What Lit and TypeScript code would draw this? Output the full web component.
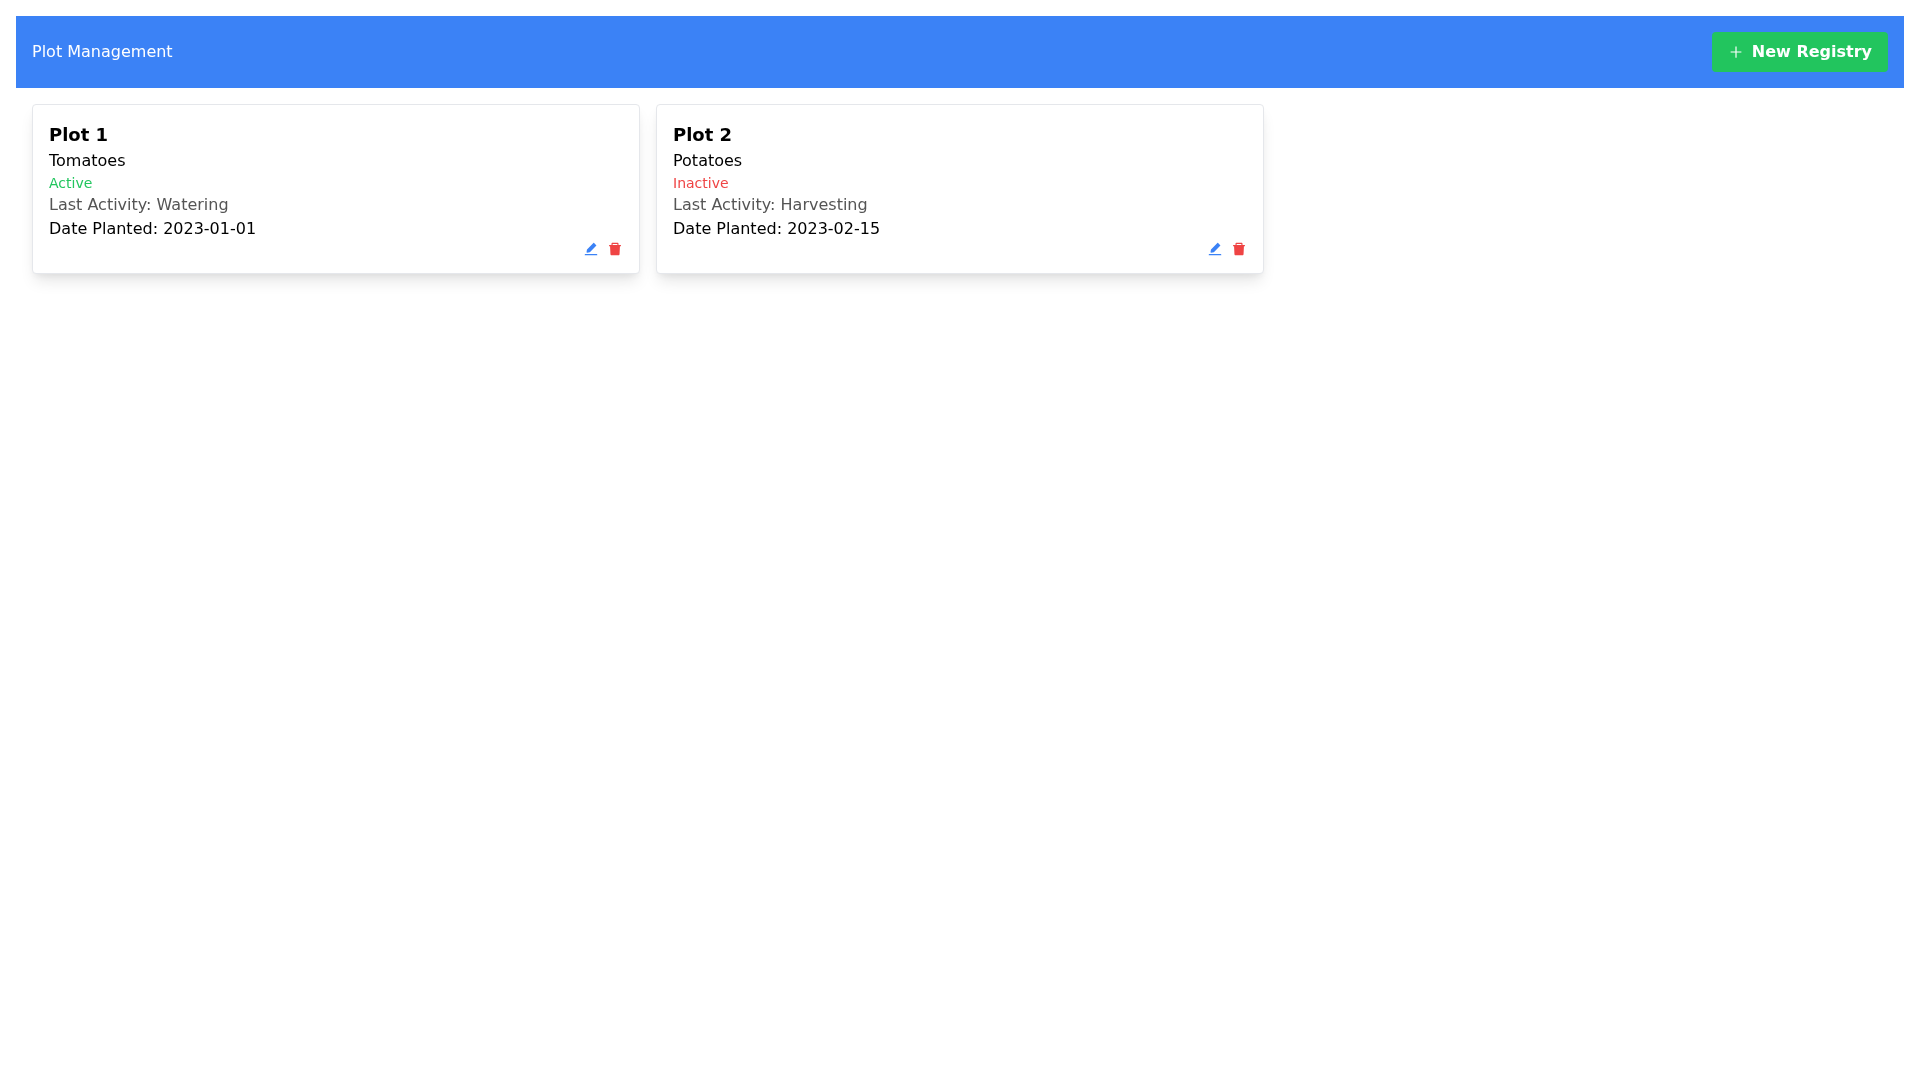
import { LitElement, html, css, svg } from "lit";
import { customElement } from "lit/decorators.js";

const plots = [
  { name: "Plot 1", crop: "Tomatoes", status: "Active", activity: "Watering", date: "2023-01-01" },
  { name: "Plot 2", crop: "Potatoes", status: "Inactive", activity: "Harvesting", date: "2023-02-15" },
];

const editIcon = svg`<svg class="icon" viewBox="64 64 896 896" width="14" height="14" fill="#3b82f6" aria-hidden="true"><path d="M880 836H144c-17.7 0-32 14.3-32 32v36c0 4.4 3.6 8 8 8h784c4.4 0 8-3.6 8-8v-36c0-17.7-14.3-32-32-32zm-622.3-84c2 0 4-.2 6-.5L431.9 722c2-.4 3.9-1.3 5.3-2.8l423.9-423.9a9.96 9.96 0 000-14.1L694.9 114.9c-1.9-1.9-4.4-2.9-7.1-2.9s-5.2 1-7.1 2.9L256.8 538.8c-1.5 1.5-2.4 3.3-2.8 5.3l-29.5 168.2a33.5 33.5 0 009.4 29.8c6.6 6.4 14.9 9.9 23.8 9.9z"/></svg>`;
const trashIcon = svg`<svg class="icon" viewBox="64 64 896 896" width="14" height="14" fill="#ef4444" aria-hidden="true"><path d="M864 256H736v-80c0-35.3-28.7-64-64-64H352c-35.3 0-64 28.7-64 64v80H160c-17.7 0-32 14.3-32 32v32c0 4.4 3.6 8 8 8h60.4l24.7 523c1.6 34.1 29.8 61 63.9 61h454c34.2 0 62.3-26.8 63.9-61l24.7-523H888c4.4 0 8-3.6 8-8v-32c0-17.7-14.3-32-32-32zm-200 0H360v-72h304v72z"/></svg>`;

@customElement("app-root")
export class AppRoot extends LitElement {
  static styles = css`
    :host { display: block; font-family: "DejaVu Sans", sans-serif; color: #000; }
    .page { padding: 16px; background: #fff; min-height: 1080px; box-sizing: border-box; will-change: transform; }
    .header { display: flex; align-items: center; justify-content: space-between; height: 72px; padding: 16px; box-sizing: border-box; background: #3b82f6; color: #fff; font-size: 16px; line-height: 24px; }
    .new { display: flex; align-items: center; gap: 8px; height: 40px; padding: 0 16px; box-sizing: border-box; border: 0; border-radius: 4px; background: #22c55e; color: #fff; font: 700 16px/24px "DejaVu Sans", sans-serif; }
    .plus { display: flex; align-items: center; justify-content: center; width: 16px; height: 16px; }
    .grid { display: grid; grid-template-columns: repeat(3, 1fr); gap: 16px; padding: 16px; }
    .card { display: flex; flex-direction: column; padding: 16px; background: #fff; border: 1px solid #e5e7eb; border-radius: 4px; box-shadow: 0 10px 15px -3px rgba(0,0,0,.1), 0 4px 6px -2px rgba(0,0,0,.05); }
    .title { margin: 0; font-size: 18px; font-weight: 700; line-height: 28px; }
    .crop { font-size: 16px; line-height: 24px; }
    .status { font-size: 14px; line-height: 20px; }
    .active { color: #22c55e; }
    .inactive { color: #ef4444; }
    .activity { font-size: 16px; line-height: 24px; color: #555; }
    .date { font-size: 16px; line-height: 24px; }
    .actions { display: flex; justify-content: flex-end; gap: 8px; }
    .action { display: flex; align-items: center; justify-content: center; width: 16px; height: 16px; padding: 0; border: 0; background: none; }
    .icon { display: block; }
  `;

  render() {
    return html`<div class="page">
      <header class="header">
        <span>Plot Management</span>
        <button class="new">
          <span class="plus"><svg class="icon" viewBox="64 64 896 896" width="14" height="14" fill="currentColor" aria-hidden="true"><path d="M482 152h60q8 0 8 8v704q0 8-8 8h-60q-8 0-8-8V160q0-8 8-8z"/><path d="M176 474h672q8 0 8 8v60q0 8-8 8H176q-8 0-8-8v-60q0-8 8-8z"/></svg></span>
          New Registry
        </button>
      </header>
      <div class="grid">
        ${plots.map(
          (p) => html`<article class="card">
            <h2 class="title">${p.name}</h2>
            <div class="crop">${p.crop}</div>
            <div class="status ${p.status.toLowerCase()}">${p.status}</div>
            <div class="activity">Last Activity: ${p.activity}</div>
            <div class="date">Date Planted: ${p.date}</div>
            <div class="actions">
              <button class="action">${editIcon}</button>
              <button class="action">${trashIcon}</button>
            </div>
          </article>`
        )}
      </div>
    </div>`;
  }
}
